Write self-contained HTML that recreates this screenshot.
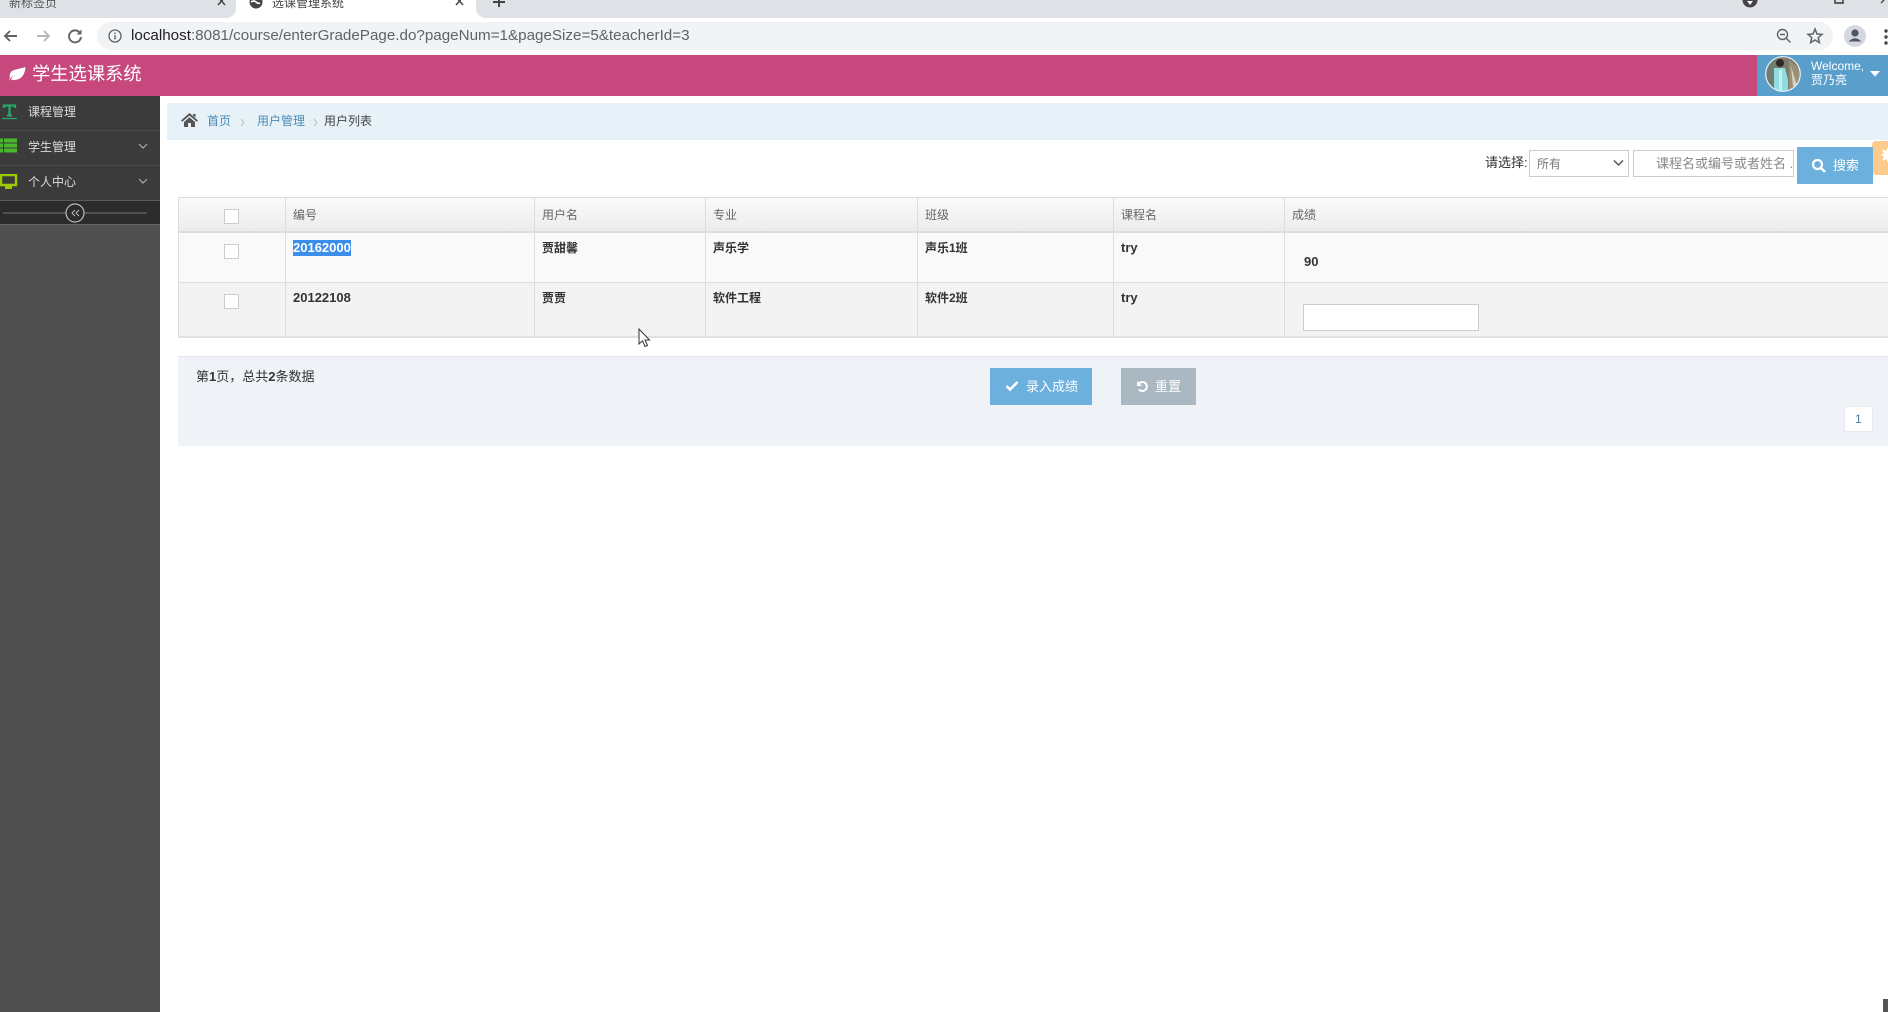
<!DOCTYPE html>
<html lang="zh"><head><meta charset="utf-8"><title>选课管理系统</title>
<style>
html,body{margin:0;padding:0;width:1888px;height:1012px;overflow:hidden;background:#fff}
body{position:relative;font:12px/16px "Liberation Sans","Noto Sans CJK SC",sans-serif;color:#333}
.a,.t,svg{position:absolute}
.a{display:block}
.t{white-space:nowrap;height:16px;line-height:16px}
.th{color:#666;font-size:12px;top:207px}
.b{font-weight:bold;color:#333}
.n{font-size:13px}
.vl{position:absolute;width:1px;background:#ddd;top:198px;height:139px}
.cb{position:absolute;left:224px;width:13px;height:13px;border:1px solid #ccc;background:#fff}
</style></head><body>

<div class="a" style="left:0;top:0;width:1888px;height:18px;background:#dee1e6"></div>
<div class="a" style="left:0;top:18px;width:1888px;height:37px;background:#fff"></div>
<div class="a" style="left:236px;top:0;width:240px;height:18px;background:#fff"></div>
<div class="a" style="left:226px;top:8px;width:10px;height:10px;background:#fff"></div>
<div class="a" style="left:226px;top:6px;width:10px;height:12px;background:#dee1e6;border-radius:0 0 10px 0"></div>
<div class="a" style="left:476px;top:8px;width:10px;height:10px;background:#fff"></div>
<div class="a" style="left:476px;top:6px;width:10px;height:12px;background:#dee1e6;border-radius:0 0 0 10px"></div>
<div class="t" style="left:9px;top:-5px;color:#555">新标签页</div>
<div class="t" style="left:272px;top:-5px;color:#444">选课管理系统</div>
<svg style="left:216px;top:0" width="12" height="8"><path d="M2 -3L9 5M9 -3L2 5" stroke="#444" stroke-width="1.5"/></svg>
<svg style="left:454px;top:0" width="12" height="8"><path d="M2 -3L9 5M9 -3L2 5" stroke="#444" stroke-width="1.5"/></svg>
<svg style="left:248px;top:0" width="16" height="10"><circle cx="8" cy="2" r="6.500" fill="#444"/><path d="M3 2q3-2 5 0t4 1" stroke="#fff" stroke-width="1.600" fill="none"/></svg>
<svg style="left:492px;top:0" width="14" height="8"><path d="M7 -4V7M1 2H13" stroke="#444" stroke-width="2"/></svg>
<svg style="left:1742px;top:0" width="16" height="9"><circle cx="8" cy="0" r="7.500" fill="#444"/><path d="M5 1h6L8 5z" fill="#fff"/></svg>
<svg style="left:1834px;top:0" width="12" height="5"><path d="M1 -3V3H9V-3" fill="none" stroke="#333" stroke-width="1.400"/></svg>
<svg style="left:1880px;top:0" width="8" height="5"><path d="M1 3L6 -2" stroke="#444" stroke-width="1.300"/></svg>

<svg style="left:2px;top:27px" width="18" height="18"><path d="M15 9H3M8 4L3 9L8 14" fill="none" stroke="#5f6368" stroke-width="1.900"/></svg>
<svg style="left:34px;top:27px" width="18" height="18"><path d="M3 9H15M10 4L15 9L10 14" fill="none" stroke="#b5b8bc" stroke-width="1.900"/></svg>
<svg style="left:66px;top:27px" width="18" height="18"><path d="M14 6A6 6 0 1 0 15 10" fill="none" stroke="#5f6368" stroke-width="1.900"/><path d="M15.500 2.500V7.500H10.500z" fill="#5f6368"/></svg>
<div class="a" style="left:97px;top:22px;width:1736px;height:28px;background:#f1f3f4;border-radius:14px"></div>
<svg style="left:108px;top:29px" width="14" height="14"><circle cx="7" cy="7" r="6" fill="none" stroke="#5f6368" stroke-width="1.300"/><path d="M7 6V10.500M7 3.500V5" stroke="#5f6368" stroke-width="1.400"/></svg>
<div class="t" style="left:131px;top:28px;font-size:15.2px;color:#5f6368"><span style="color:#202124">localhost</span>:8081/course/enterGradePage.do?pageNum=1&amp;pageSize=5&amp;teacherId=3</div>
<svg style="left:1775px;top:27px" width="18" height="18"><circle cx="7.500" cy="7.500" r="5" fill="none" stroke="#5f6368" stroke-width="1.400"/><path d="M11 11L15.500 15.500M5 7.500H10" stroke="#5f6368" stroke-width="1.400"/></svg>
<svg style="left:1806px;top:27px" width="18" height="18"><path d="M9 2L11 7L16 7.400L12.200 10.600L13.400 15.600L9 13L4.600 15.600L5.800 10.600L2 7.400L7 7z" fill="none" stroke="#5f6368" stroke-width="1.500"/></svg>
<div class="a" style="left:1844px;top:25px;width:22px;height:22px;border-radius:50%;background:#d5d8e0"></div>
<svg style="left:1844px;top:25px" width="22" height="22"><circle cx="11" cy="8" r="3.600" fill="#4e5666"/><path d="M4.500 16.500Q11 10 17.500 16.500z" fill="#4e5666"/></svg>
<svg style="left:1883px;top:28px" width="5" height="18"><circle cx="3" cy="3" r="1.700" fill="#444"/><circle cx="3" cy="9" r="1.700" fill="#444"/><circle cx="3" cy="15" r="1.700" fill="#444"/></svg>

<div class="a" style="left:0;top:55px;width:1888px;height:41px;background:#c7487d"></div>
<svg style="left:8px;top:66px" width="18" height="16"><path d="M0.500 15Q2 12 7 8.500Q3.500 12 3 13.500Q7 15 12 12.500Q17 9 17.500 1Q10 3 6 4Q0.500 6 2 12Q1 13 0.500 15z" fill="#fff"/></svg>
<div class="t" style="left:32px;top:64px;font-size:18.300px;line-height:20px;height:20px;color:#fff">学生选课系统</div>
<div class="a" style="left:1757px;top:55px;width:131px;height:41px;background:#5a9fcb"></div>
<svg style="left:1765px;top:56px" width="37" height="37"><defs><clipPath id="av"><circle cx="18" cy="18" r="17"/></clipPath></defs><g clip-path="url(#av)"><rect width="37" height="37" fill="#7d7a6c"/><rect x="0" y="0" width="11" height="37" fill="#6f7c70"/><path d="M24 4L37 14V37H24z" fill="#9a9078"/><path d="M26 10L32 30H28z" fill="#d8d2c0"/><circle cx="15" cy="7" r="4" fill="#2f2a28"/><path d="M9 12h11l3 12v13H9z" fill="#8fdde0"/><path d="M14 14h3v20h-3z" fill="#c5f0ee"/></g><circle cx="18" cy="18" r="17.300" fill="none" stroke="#e6f2f7" stroke-width="1.200"/></svg>
<div class="t" style="left:1811px;top:58px;color:#fff;font-size:12px">Welcome,</div>
<div class="t" style="left:1811px;top:72px;color:#fff;font-size:12px">贾乃亮</div>
<svg style="left:1870px;top:71px" width="10" height="6"><path d="M0 0H10L5 5.500z" fill="#fff"/></svg>

<div class="a" style="left:0;top:96px;width:160px;height:916px;background:#505050"></div>
<div class="a" style="left:0;top:96px;width:160px;height:104px;background:#3b3b3b"></div>
<div class="a" style="left:0;top:130px;width:160px;height:1px;background:#4a4a4a"></div>
<div class="a" style="left:0;top:165px;width:160px;height:1px;background:#4a4a4a"></div>
<div class="a" style="left:0;top:200px;width:160px;height:25px;background:#2b2b2b;border-top:1px solid #5a5a5a;border-bottom:1px solid #666;box-sizing:border-box"></div>
<svg style="left:1px;top:103px" width="17" height="17"><path d="M3 5V2.500H14V5M8.500 2.500V12.500M6 12.500H11" fill="none" stroke="#27a468" stroke-width="2.300"/><path d="M1 15.500H16" stroke="#27a468" stroke-width="1.300"/></svg>
<svg style="left:0;top:138px" width="18" height="16"><path d="M0 0.500h3v4H0zM0 5.500h3v4H0zM0 10.500h3v4H0zM4 0.500H17v4H4zM4 5.500H17v4H4zM4 10.500H17v4H4z" fill="#49b82d"/></svg>
<svg style="left:0;top:174px" width="18" height="16"><path d="M1 1H16V11H1z" fill="none" stroke="#9ccb00" stroke-width="2.400"/><path d="M5 12H12V15H5z" fill="#9ccb00"/></svg>
<div class="t" style="left:28px;top:104px;color:#ddd">课程管理</div>
<div class="t" style="left:28px;top:139px;color:#ddd">学生管理</div>
<div class="t" style="left:28px;top:174px;color:#ddd">个人中心</div>
<svg style="left:138px;top:143px" width="10" height="7"><path d="M1 1L5 5L9 1" fill="none" stroke="#aaa" stroke-width="1.200"/></svg>
<svg style="left:138px;top:178px" width="10" height="7"><path d="M1 1L5 5L9 1" fill="none" stroke="#aaa" stroke-width="1.200"/></svg>
<svg style="left:0;top:201px" width="160" height="22"><path d="M3 12H147" stroke="#777"/><circle cx="75" cy="12" r="9" fill="#2b2b2b" stroke="#bbb" stroke-width="1.200"/><path d="M75 9L72 12L75 15M79 9L76 12L79 15" fill="none" stroke="#bbb" stroke-width="1"/></svg>

<div class="a" style="left:167px;top:103px;width:1721px;height:37px;background:#e7f2f8"></div>
<svg style="left:181px;top:113px" width="17" height="14"><path d="M12 1H14.500V4.500L12 2.500z" fill="#555"/><path d="M8.500 0L0 7.500L1.200 8.800L8.500 2.600L15.800 8.800L17 7.500z" fill="#555"/><path d="M3 9L8.500 4.300L14 9V14H10V10H7V14H3z" fill="#555"/></svg>
<div class="t" style="left:207px;top:113px;color:#4a8bb5">首页</div>
<svg style="left:240px;top:118px" width="5" height="9"><path d="M1 1L4 4.500L1 8" fill="none" stroke="#bbb" stroke-width="1"/></svg>
<div class="t" style="left:257px;top:113px;color:#4a8bb5">用户管理</div>
<svg style="left:313px;top:118px" width="5" height="9"><path d="M1 1L4 4.500L1 8" fill="none" stroke="#bbb" stroke-width="1"/></svg>
<div class="t" style="left:324px;top:113px;color:#444">用户列表</div>

<div class="t" style="left:1485px;top:155px;font-size:13px;color:#333">请选择:</div>
<div class="a" style="left:1529px;top:150px;width:98px;height:25px;border:1px solid #ccc;background:#fff"></div>
<div class="t" style="left:1537px;top:156px;color:#777">所有</div>
<svg style="left:1613px;top:159px" width="11" height="8"><path d="M1 1.500L5.500 6L10 1.500" fill="none" stroke="#555" stroke-width="1.500"/></svg>
<div class="a" style="left:1633px;top:150px;width:159px;height:25px;border:1px solid #ccc;background:#fff"></div>
<div class="t" style="left:1656px;top:156px;font-size:13px;color:#888">课程名或编号或者姓名 .</div>
<div class="a" style="left:1872px;top:141px;width:16px;height:34px;background:#fdcc8c;border-radius:4px 0 0 4px"></div>
<svg style="left:1881px;top:148px" width="7" height="14"><circle cx="7" cy="7" r="3.500" fill="none" stroke="#fff" stroke-width="3"/><path d="M7 0V14M0.500 7H7M2 2L7 7M2 12L7 7" stroke="#fff" stroke-width="2"/></svg>
<div class="a" style="left:1797px;top:147px;width:76px;height:37px;background:#6cb0de"></div>
<svg style="left:1811px;top:158px" width="16" height="16"><circle cx="6.500" cy="6.500" r="4.500" fill="none" stroke="#fff" stroke-width="2.200"/><path d="M10 10L14 14" stroke="#fff" stroke-width="2.600"/></svg>
<div class="t" style="left:1833px;top:158px;font-size:13px;color:#fff">搜索</div>

<div class="a" style="left:178px;top:197px;width:1710px;height:141px;background:#f3f3f3;box-sizing:border-box;border:1px solid #ddd;border-right:0;border-bottom:2px solid #e0e0e0"></div>
<div class="a" style="left:179px;top:198px;width:1709px;height:33px;background:linear-gradient(#fafafa,#ececec)"></div>
<div class="a" style="left:179px;top:231px;width:1709px;height:2px;background:#ddd"></div>
<div class="a" style="left:179px;top:233px;width:1709px;height:49px;background:#f9f9f9"></div>
<div class="a" style="left:179px;top:282px;width:1709px;height:1px;background:#ddd"></div>
<div class="vl" style="left:285px"></div><div class="vl" style="left:534px"></div><div class="vl" style="left:705px"></div><div class="vl" style="left:917px"></div><div class="vl" style="left:1113px"></div><div class="vl" style="left:1284px"></div>
<div class="cb" style="top:209px"></div><div class="cb" style="top:244px"></div><div class="cb" style="top:294px"></div>

<div class="t th" style="left:293px">编号</div>
<div class="t th" style="left:542px">用户名</div>
<div class="t th" style="left:713px">专业</div>
<div class="t th" style="left:925px">班级</div>
<div class="t th" style="left:1121px">课程名</div>
<div class="t th" style="left:1292px">成绩</div>

<div class="a" style="left:293px;top:240px;width:58px;height:16px;background:#3b8eea"></div>
<div class="t b n" style="left:293px;top:240px;color:#fff">20162000</div>
<div class="t b" style="left:542px;top:240px">贾甜馨</div>
<div class="t b" style="left:713px;top:240px">声乐学</div>
<div class="t b" style="left:925px;top:240px">声乐1班</div>
<div class="t b n" style="left:1121px;top:240px">try</div>
<div class="t b n" style="left:1304px;top:253px;line-height:18px">90</div>

<div class="t b n" style="left:293px;top:290px">20122108</div>
<div class="t b" style="left:542px;top:290px">贾贾</div>
<div class="t b" style="left:713px;top:290px">软件工程</div>
<div class="t b" style="left:925px;top:290px">软件2班</div>
<div class="t b n" style="left:1121px;top:290px">try</div>
<div class="a" style="left:1303px;top:304px;width:174px;height:25px;border:1px solid #ccc;background:#fff"></div>

<svg style="left:638px;top:328px" width="13" height="21"><path d="M1 1V16L4.500 12.800L7 18.500L9.500 17.500L7 12H11.500z" fill="#fff" stroke="#333" stroke-width="1"/></svg>

<div class="a" style="left:178px;top:356px;width:1710px;height:90px;background:#eff2f7;border-top:1px solid #e4e6ea;box-sizing:border-box"></div>
<div class="t" style="left:196px;top:369px;color:#333;font-size:13px">第<b>1</b>页，总共<b>2</b>条数据</div>
<div class="a" style="left:990px;top:368px;width:102px;height:37px;background:#6cb0de"></div>
<svg style="left:1005px;top:380px" width="14" height="12"><path d="M1.500 6L5 9.500L12.500 2" fill="none" stroke="#fff" stroke-width="2.600"/></svg>
<div class="t" style="left:1026px;top:379px;font-size:13px;color:#fff">录入成绩</div>
<div class="a" style="left:1121px;top:368px;width:75px;height:37px;background:#aab8c2"></div>
<svg style="left:1136px;top:380px" width="13" height="13"><path d="M3 3.500A4.500 4.500 0 1 1 3 9.500" fill="none" stroke="#fff" stroke-width="2"/><path d="M1 1V6H6z" fill="#fff"/></svg>
<div class="t" style="left:1155px;top:379px;font-size:13px;color:#fff">重置</div>
<div class="a" style="left:1844px;top:406px;width:29px;height:26px;background:#fff;border:1px solid #e6e9ee;box-sizing:border-box"></div>
<div class="t" style="left:1855px;top:411px;color:#4a7ba6">1</div>

<div class="a" style="left:1883px;top:999px;width:5px;height:13px;background:#555"></div>
</body></html>
